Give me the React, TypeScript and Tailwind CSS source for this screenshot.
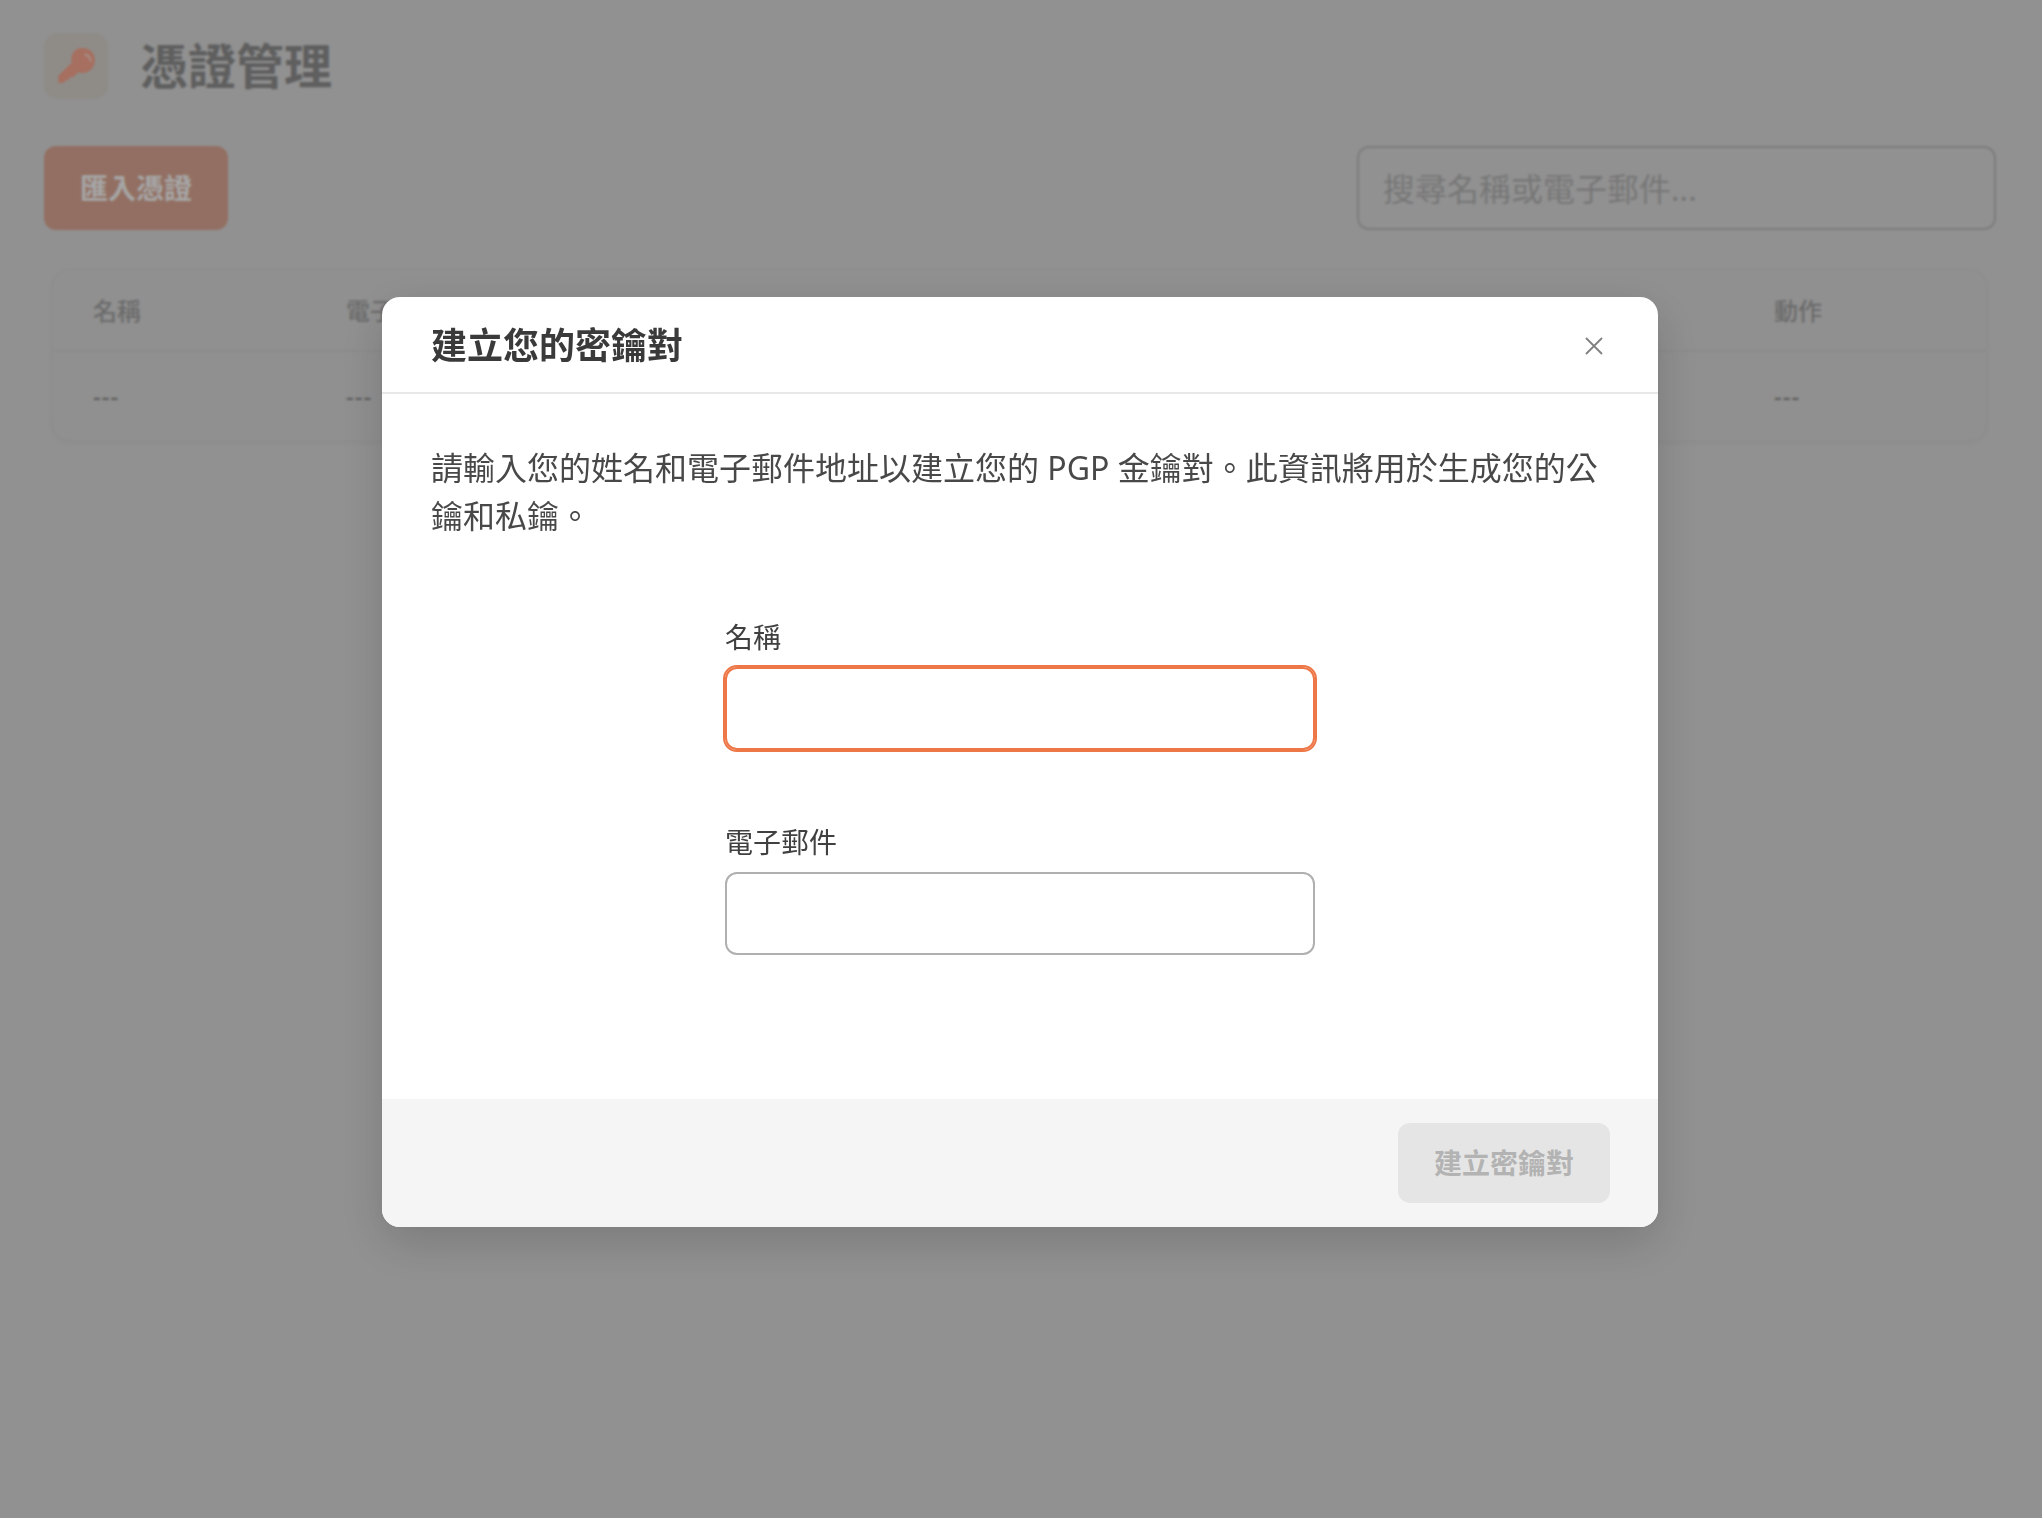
const font = { fontFamily: '"Noto Sans", "Noto Sans CJK TC", sans-serif' }

function KeyIcon() {
  return (
    <svg viewBox="12 18 192 192" className="h-[64px] w-[64px]">
      <path
        d="M128 60c21 0 37 16 37 37s-17 38-37 38c-5 0-9-1-13-2l-15 15h-12v8H78l-8 9H55v-22l41-40c-1-3-2-7-2-9 0-20 14-34 32-34Z"
        fill="#ffab94"
      />
      <path d="M136 80c8 2 14 9 16 18" stroke="#ffe4da" strokeWidth="5" fill="none" strokeLinecap="round" />
    </svg>
  )
}

function Backdrop() {
  const cols = [
    { label: '名稱', width: 'w-[253px]' },
    { label: '電子郵件', width: 'flex-1' },
    { label: '動作', width: 'w-[212px]' },
  ]

  return (
    <div className="flex flex-col pt-[33px] pr-[46px] pl-[44px]">
      <div className="flex items-center gap-[32px]">
        <div className="flex h-[66px] w-[64px] items-center justify-center rounded-[14px] bg-[#dcd7d0]">
          <KeyIcon />
        </div>
        <h1 className="text-[48px] leading-[64px] font-bold text-[#929292]">憑證管理</h1>
      </div>

      <div className="mt-[47px] flex items-center justify-between">
        <button
          type="button"
          className="flex h-[84px] w-[184px] items-center justify-center rounded-[12px] bg-[#e1ab97] text-[28px] font-bold text-white"
        >
          匯入憑證
        </button>
        <input
          placeholder="搜尋名稱或電子郵件..."
          className="h-[84px] w-[639px] rounded-[12px] border-2 border-[#c0c0c0] bg-[#dfdfdf] px-[24px] text-[32px] placeholder:text-[#b7b7b7]"
        />
      </div>

      <div className="mt-[39px] mr-[9px] ml-[8px] overflow-hidden rounded-[18px] border border-[#d9d9d9] bg-[#dddddd] shadow-[0_2px_6px_rgba(0,0,0,0.04)]">
        <div className="flex h-[82px] items-center border-b-2 border-[#d6d6d6] pt-[2px] pl-[40px] text-[24px] font-medium text-[#a5a5a5]">
          {cols.map((col) => (
            <div key={col.label} className={col.width}>
              {col.label}
            </div>
          ))}
        </div>
        <div className="flex h-[88px] items-center pl-[40px] text-[24px] font-medium tracking-[1px] text-[#8e8e8e]">
          {cols.map((col) => (
            <div key={col.label} className={col.width}>
              ---
            </div>
          ))}
        </div>
      </div>
    </div>
  )
}

function Field({ label, focused }: { label: string; focused?: boolean }) {
  return (
    <label className="flex flex-col">
      <span className="text-[28px] leading-[40px] text-[#404040]">{label}</span>
      <input
        className={
          focused
            ? 'mt-[10px] h-[83px] rounded-[12px] border-2 border-[#ee7748] outline-2 outline-[#ee7748]'
            : 'mt-[10px] h-[83px] rounded-[12px] border-2 border-[#b0b0b0]'
        }
      />
    </label>
  )
}

export default function App() {
  return (
    <div className="relative h-[1518px] w-full overflow-hidden bg-[#dfdfdf]" style={font}>
      <Backdrop />

      <div className="fixed inset-0 flex items-center justify-center bg-black/35 pt-[6px] pr-[2px] backdrop-blur-[1px]">
        <div className="flex h-[930px] w-[1276px] flex-col overflow-hidden rounded-[18px] bg-white shadow-[0_16px_48px_rgba(0,0,0,0.16)]">
          <div className="flex h-[97px] flex-none items-center justify-between border-b-2 border-[#e8e8e8] pt-[2px] pr-[55px] pl-[49px]">
            <h2 className="text-[36px] font-bold text-[#3a3a3a]">建立您的密鑰對</h2>
            <svg viewBox="0 0 18 18" className="h-[18px] w-[18px]" stroke="#808080" strokeWidth="1.800" fill="none">
              <path d="M1 1l16 16M17 1L1 17" />
            </svg>
          </div>

          <div className="flex flex-1 flex-col px-[49px] pt-[50px]">
            <p className="text-[32px] leading-[48px] text-[#484848]">
              請輸入您的姓名和電子郵件地址以建立您的 PGP 金鑰對。此資訊將用於生成您的公鑰和私鑰。
            </p>
            <div className="mx-auto mt-[77px] flex w-[590px] flex-col gap-[72px]">
              <Field label="名稱" focused />
              <Field label="電子郵件" />
            </div>
          </div>

          <div className="flex h-[128px] flex-none items-center justify-end bg-[#f5f5f5] pr-[48px]">
            <button
              type="button"
              className="flex h-[80px] w-[212px] items-center justify-center rounded-[12px] bg-[#e5e5e5] text-[28px] font-bold text-[#b3b3b3]"
            >
              建立密鑰對
            </button>
          </div>
        </div>
      </div>
    </div>
  )
}
